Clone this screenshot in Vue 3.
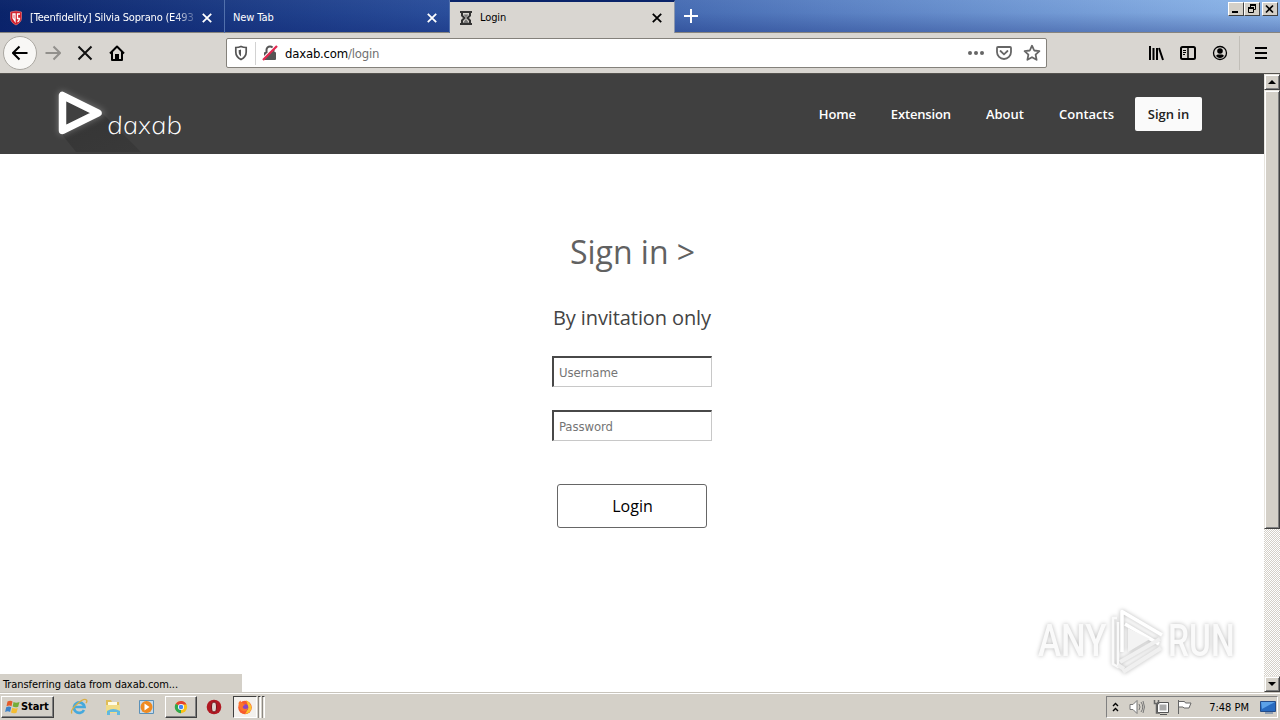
<script setup>
import { ref, reactive } from 'vue'

const tabs = [
  { title: '[Teenfidelity] Silvia Soprano (E493', icon: 'shield', fade: true },
  { title: 'New Tab', icon: '' },
  { title: 'Login', icon: 'hourglass' },
]
const activeTab = ref(2)

const links = [
  { name: 'Home', cls: 'home' },
  { name: 'Extension', cls: 'extension' },
  { name: 'About', cls: 'about' },
  { name: 'Contacts', cls: 'contacts' },
]

const form = reactive({
  username: '',
  password: '',
})
</script>

<template>
  <div class="screen">
    <div class="titlebar">
      <div v-for="(tab, i) in tabs" :key="tab.title" class="tab" :class="{ active: i === activeTab }" @click="activeTab = i">
        <svg v-if="tab.icon === 'shield'" class="tab-icon" width="16" height="16" viewBox="0 0 16 16">
          <path d="M2.500 2 8 1l5.500 1v6C13.500 11.500 11 13.500 8 15 5 13.500 2.500 11.500 2.500 8z" fill="#d3202b" stroke="#e88" stroke-width=".6" />
          <path d="M5 4v4l2 3V4zM9.500 12q2-1.500 2-3.500H9.500V4H12" fill="none" stroke="#fff" stroke-width="1.300" />
        </svg>
        <svg v-if="tab.icon === 'hourglass'" class="tab-icon" width="16" height="16" viewBox="0 0 16 16">
          <path d="M2 2h12M2 14h12" stroke="#333" stroke-width="2" />
          <path d="M4 2v3.500l2.500 2.500L4 10.500V14M12 2v3.500L9.500 8l2.500 2.500V14" fill="none" stroke="#333" stroke-width="2" />
          <path d="M5.500 4.500h5L8 7.500zM8 9l3 4H5z" fill="#777" />
        </svg>
        <span class="tab-title" :class="{ fade: tab.fade }">{{ tab.title }}</span>
        <svg class="tab-close" width="10" height="10" viewBox="0 0 10 10">
          <path d="M.8.800l8.400 8.400M9.200.800.800 9.200" stroke="currentColor" stroke-width="1.800" />
        </svg>
      </div>
      <svg class="plus" width="14" height="14" viewBox="0 0 14 14">
        <path d="M7 0v14M0 7h14" stroke="#fff" stroke-width="2" />
      </svg>
      <div class="win-buttons">
        <button class="win">
          <svg width="14" height="12" viewBox="0 0 14 12"><path d="M3 9h6" stroke="#000" stroke-width="2" /></svg>
        </button>
        <button class="win">
          <svg width="14" height="12" viewBox="0 0 14 12">
            <path d="M5.500 5V1.500h5v5H9" fill="none" stroke="#000" />
            <path d="M5 2h6M3 5h6" stroke="#000" stroke-width="2" />
            <path d="M3.500 4.500h5v5h-5z" fill="none" stroke="#000" />
          </svg>
        </button>
        <button class="win gap">
          <svg width="14" height="12" viewBox="0 0 14 12"><path d="m3 2.500 7 7m0-7-7 7" stroke="#000" stroke-width="1.700" /></svg>
        </button>
      </div>
    </div>

    <div class="toolbar">
      <div class="back">
        <svg width="16" height="16" viewBox="0 0 16 16"><path d="M15.500 8H1.500M7.500 1.500 1 8l6.500 6.500" fill="none" stroke="#000" stroke-width="2" /></svg>
      </div>
      <svg class="forward" width="16" height="16" viewBox="0 0 16 16"><path d="M.5 8h14M8.500 1.500 15 8l-6.500 6.500" fill="none" stroke="#92908c" stroke-width="2" /></svg>
      <svg class="stop" width="16" height="16" viewBox="0 0 16 16"><path d="m1.500 1.500 13 13m0-13-13 13" stroke="#111" stroke-width="2" /></svg>
      <svg class="house" width="16" height="16" viewBox="0 0 16 16">
        <path d="M1 8.500 8 1.500l7 7M3 7v8h10V7" fill="none" stroke="#000" stroke-width="2" stroke-linejoin="round" />
        <path d="M6 9h4v6H6z" />
      </svg>
      <div class="urlbar">
        <svg class="track" width="14" height="16" viewBox="0 0 14 16">
          <path d="M7 1.500c2 .9 3.700 1 5.200 1V7c0 3.500-1.700 5.700-5.200 7.500C3.500 12.700 1.800 10.500 1.800 7V2.500c1.500 0 3.200-.1 5.200-1z" fill="none" stroke="#555" stroke-width="1.700" />
          <path d="M7 4.500c-.9.400-1.600.5-2.300.5v2c0 2 .8 3.300 2.300 4.500z" fill="#555" />
        </svg>
        <i class="divider"></i>
        <svg class="lock" width="16" height="16" viewBox="0 0 16 16">
          <path d="M4.500 8V5a3.500 3.500 0 0 1 7 0v3" fill="none" stroke="#555" stroke-width="2" />
          <rect x="2" y="7" width="12" height="8" rx="1" fill="#555" />
          <path d="M.5 14 14 .5" stroke="#fff" stroke-width="2" />
          <path d="M1 15 15 1" stroke="#e22850" stroke-width="2.300" />
        </svg>
        <span class="url">daxab.com<em>/login</em></span>
        <svg class="dots" width="18" height="16" viewBox="0 0 18 16" fill="#666"><circle cx="3" cy="8" r="2" /><circle cx="9" cy="8" r="2" /><circle cx="15" cy="8" r="2" /></svg>
        <svg class="pocket" width="16" height="16" viewBox="0 0 16 16" fill="none" stroke="#666" stroke-width="1.800">
          <path d="M2 2h12q1 0 1 1v4a7 7 0 0 1-14 0V3q0-1 1-1z" /><path d="M4.500 6 8 9.300 11.500 6" stroke-linecap="round" />
        </svg>
        <svg class="star" width="18" height="18" viewBox="0 0 18 18"><path d="m9 1.700 2.200 4.800 5.200.6-3.800 3.500 1 5.200L9 13.200l-4.600 2.600 1-5.200L1.600 7.100l5.200-.6z" fill="none" stroke="#666" stroke-width="1.800" stroke-linejoin="round" /></svg>
      </div>
      <div class="tools">
        <svg width="16" height="16" viewBox="0 0 16 16"><path d="M2 1v14M5.500 3v12M9 3v12M11 3l4 12" stroke="#000" stroke-width="2" fill="none" /></svg>
        <svg width="16" height="16" viewBox="0 0 16 16"><rect x="1" y="2" width="14" height="12" rx="1.500" fill="none" stroke="#000" stroke-width="2" /><path d="M8 2v12" stroke="#000" stroke-width="1.500" /><path d="M3 5.500h3M3 7.500h3M3 9.500h2" stroke="#000" /></svg>
        <svg width="16" height="16" viewBox="0 0 16 16"><circle cx="8" cy="8" r="6.500" fill="none" stroke="#000" stroke-width="1.300" /><circle cx="8" cy="6" r="2.800" /><path d="M3.500 10q1 1 2-.5h5q1 1.500 2 .5Q11 13 8 13T3.500 10z" /></svg>
        <i class="sep"></i>
        <svg width="12" height="16" viewBox="0 0 12 16"><path d="M0 3h12M0 8h12M0 13h12" stroke="#000" stroke-width="2" /></svg>
      </div>
    </div>

    <div class="viewport">
      <div class="page">
        <header>
          <svg class="logo" width="140" height="80" viewBox="0 0 140 80">
            <defs>
              <filter id="glow" x="-30%" y="-30%" width="160%" height="160%"><feGaussianBlur stdDeviation="3" /></filter>
              <linearGradient id="shade" x1="0" y1="0" x2="1" y2="1"><stop offset="0" stop-color="#353535" /><stop offset="1" stop-color="#393939" /></linearGradient>
            </defs>
            <path d="M15 58 56 38l40 40H31z" fill="url(#shade)" />
            <path d="M17 21v36l38-18z" fill="none" stroke="#aaa" stroke-width="8" stroke-linejoin="round" filter="url(#glow)" opacity=".45" />
            <path d="M17.500 21.500v35L53 39z" fill="#404040" stroke="#fff" stroke-width="7.500" stroke-linejoin="round" />
            <!-- slanted face leaned back upright, it has the round one-storey a -->
            <g transform="translate(63.500 60) skewX(12)">
              <text x="0" y="0" textLength="75" lengthAdjust="spacingAndGlyphs">daxab</text>
            </g>
          </svg>
          <nav>
            <a v-for="link in links" :key="link.name" :class="link.cls">{{ link.name }}</a>
            <a class="signin">Sign in</a>
          </nav>
        </header>
        <main>
          <h1>Sign in &gt;</h1>
          <h2>By invitation only</h2>
          <form @submit.prevent>
            <input v-model="form.username" type="text" placeholder="Username">
            <input v-model="form.password" type="password" placeholder="Password">
            <button class="login">Login</button>
          </form>
        </main>
      </div>
      <div class="scrollbar">
        <div class="arrow"><svg width="8" height="4" viewBox="0 0 8 4"><path d="M0 4 4 0l4 4z" /></svg></div>
        <div class="thumb"></div>
        <div class="arrow down"><svg width="8" height="4" viewBox="0 0 8 4"><path d="m0 0 4 4 4-4z" /></svg></div>
      </div>
      <div class="status"><span>Transferring data from daxab.com...</span></div>
      <svg class="watermark" width="230" height="76" viewBox="0 0 230 76">
        <g class="mark">
          <text transform="translate(8 51) scale(.79 1)">ANY</text>
          <text transform="translate(138 51) scale(.76 1)">RUN</text>
          <path d="M92 47V6.500L132 30M95 19l34 20" fill="none" stroke="#fff" stroke-width="3.500" stroke-linejoin="round" />
          <path d="M87 13h-4v46l5 3V17" fill="none" stroke="#fafafa" stroke-width="2.500" stroke-linejoin="round" />
          <path d="M98 23v24l22-13z" fill="#f3f3f3" />
          <path d="M90 57 130 34M93 67l38-24M88 60l6 4" fill="none" stroke="#f0f0f0" stroke-width="4" stroke-linejoin="round" />
        </g>
      </svg>
    </div>

    <footer class="taskbar">
      <button class="start">
        <svg width="17" height="16" viewBox="0 0 16 16">
          <path d="M3 2.500q3-1.500 5 0L7 7.200q-2-1.200-5 0z" fill="#e45b2a" /><path d="M9 3q2.500 1.500 6 0l-1.300 4.800q-3 1.200-5.500-.2z" fill="#74ad3a" />
          <path d="M1.700 8.200q3-1.300 5 0L5.600 13q-2.200-1.300-5 0z" fill="#3c82c9" /><path d="M7.800 8.700q2.500 1.300 5.500.2L12 13.700q-3 1.200-5.500-.2z" fill="#f4bd32" />
        </svg>
        <b>Start</b>
      </button>
      <div class="quick">
        <svg width="18" height="18" viewBox="0 0 18 18"><path d="M14 12A5.300 5.300 0 1 1 14.500 9H5" fill="none" stroke="#45a9dd" stroke-width="2.700" /><path d="M2 15.500C-1 12 13-1 16.500 2q1 1-.5 3" fill="none" stroke="#d9ae45" stroke-width="1.300" /></svg>
        <svg width="18" height="18" viewBox="0 0 18 18"><path d="M2 2h5l1 2h7v11H2z" fill="#dfbd59" /><path d="M4 4h9v4H4z" fill="#fffbe3" /><path d="M2 7h14v8H2z" fill="#f1dc87" /><path d="M3 17v-4q6-4 13 0v4h-3v-3H6v3z" fill="#61b9df" /></svg>
        <svg width="18" height="18" viewBox="0 0 18 18"><path d="M1.500 2.500h14v13h-14z" fill="#c5dbed" stroke="#5b91b8" /><circle cx="8.500" cy="9" r="6" fill="#ef8a20" /><path d="m6.500 5.500 5 3.500-5 3.500z" fill="#fff" /></svg>
      </div>
      <div class="chrome-btn">
        <svg width="14" height="14" viewBox="0 0 16 16"><circle cx="8" cy="8" r="7" fill="#fbc116" /><path d="M8 8 2 4.400A7 7 0 0 1 14.200 5H8z" fill="#e34133" /><path d="M8 8v7A7 7 0 0 1 2 4.300z" fill="#2da84f" /><circle cx="8" cy="8" r="3.500" fill="#fff" /><circle cx="8" cy="8" r="2.600" fill="#4285f4" /></svg>
      </div>
      <svg class="opera" width="16" height="16" viewBox="0 0 16 16"><circle cx="8" cy="8" r="7.300" fill="#b01822" /><ellipse cx="8" cy="8" rx="2.500" ry="5" fill="#ded6d0" stroke="#721018" /></svg>
      <div class="firefox-btn">
        <svg width="18" height="18" viewBox="0 0 18 18"><circle cx="9" cy="9.500" r="6.800" fill="#f75a2d" /><path d="M10 2q5 3 5.500 8-.5 5-6.500 6Q14 10 10 2z" fill="#fdc52d" /><circle cx="9" cy="9.500" r="3.300" fill="#8746c5" /><path d="M2.500 5q1-2 2-2.500 0 2 2 2.500L9 7Q6 8 7 10q2 2 5 0-1 4-5 3-4-1-4.500-8z" fill="#fb752c" /></svg>
      </div>
      <i class="stack"></i><i class="stack"></i>
      <div class="tray">
        <svg class="chev" width="7" height="10" viewBox="0 0 7 10"><path d="m1 4 2.500-2.500L6 4M1 9l2.500-2.500L6 9" fill="none" stroke="#000" stroke-width="1.400" /></svg>
        <svg class="sound" width="16" height="16" viewBox="0 0 16 16"><path d="M1 5.500h3L8 1.500v13l-4-4H1z" fill="#fff" stroke="#777" /><path d="M10 5q2 3 0 6M12 3q3.500 5 0 10M14 2q3 6 0 12" fill="none" stroke="#777" /></svg>
        <svg class="net" width="16" height="16" viewBox="0 0 16 16"><path d="M5.500 4.500h9v8h-9z" fill="#aaa" stroke="#fff" stroke-width="2" /><path d="M4.500 3.500h11v10h-11zM7 15.500h7" fill="none" stroke="#555" /><path d="M1.500 1v3.500h4V1M3.500 4v10H7" fill="none" stroke="#666" stroke-width="1.500" /></svg>
        <svg class="flag" width="17" height="16" viewBox="0 0 17 16"><path d="M2.500 1v14M3 2.500h5.500l1 1.500h5.500L13 9H8l-1-1H3" fill="#fff" stroke="#666" /></svg>
        <span class="clock">7:48 PM</span>
        <svg class="desk" width="16" height="14" viewBox="0 0 16 14"><path d="M.5 1.500h15v10H.5z" fill="#286bc0" stroke="#244c89" /><path d="M1 2h14L2 9z" fill="#5ca2e8" /><path d="M5 13h8" stroke="#466a9b" /></svg>
      </div>
    </footer>
  </div>
</template>

<style>
body {
  overflow: hidden;
}
</style>

<style scoped>
* {
  box-sizing: border-box;
}

.screen {
  width: 1280px;
  height: 720px;
  display: flex;
  flex-direction: column;
  background: #fff;
  font: 11px "DejaVu Sans Condensed", "DejaVu Sans", sans-serif;
  font-stretch: condensed;
  color: #000;
}

svg {
  display: block;
  flex: none;
}

button {
  padding: 0;
  font: inherit;
}

.titlebar {
  height: 33px;
  display: flex;
  background:
    linear-gradient(180deg, rgba(255, 255, 255, .02), rgba(10, 30, 110, .03) 40%, rgba(10, 30, 110, .3)),
    linear-gradient(90deg, #0a246a, #2b4f9c 35%, #5b82c4 65%, #8fb8ea);
  border-bottom: 1px solid #87847e;
}

.tab {
  width: 225px;
  height: 33px;
  flex: none;
  display: flex;
  align-items: center;
  padding: 2px 12px 0 8px;
  color: #fff;
  border-right: 1px solid #5270ac;
}

.tab.active {
  background: #d9d6d1;
  color: #000;
  border-top: 2px solid #0a246a;
  border-right-color: #8b97ad;
  padding-top: 0;
}

.tab-icon {
  margin-right: 6px;
}

.tab-title {
  flex: 1;
  white-space: nowrap;
  letter-spacing: -.1px;
}

.fade {
  min-width: 0;
  letter-spacing: -.19px;
  -webkit-mask-image: linear-gradient(90deg, #000 87%, rgba(0, 0, 0, .2));
  mask-image: linear-gradient(90deg, #000 87%, rgba(0, 0, 0, .2));
}

.tab-close {
  margin-left: 7px;
}

.plus {
  margin: 9px 0 0 9px;
}

.win-buttons {
  display: flex;
  margin: 2px 2px 0 auto;
}

.win {
  width: 16px;
  height: 14px;
  background: #d4d0c8;
  border: 1px solid;
  border-color: #fff #404040 #404040 #fff;
}

.win.gap {
  margin-left: 2px;
}

.toolbar {
  height: 41px;
  display: flex;
  align-items: center;
  background: #d9d6d1;
  border-bottom: 1px solid #55534f;
  padding-left: 3px;
}

.back {
  width: 34px;
  height: 34px;
  border: 1px solid #aaa7a1;
  border-radius: 50%;
  background: #f8f7f5;
  display: flex;
  align-items: center;
  justify-content: center;
}

.forward {
  margin-left: 8px;
}

.stop,
.house {
  margin-left: 16px;
}

.urlbar {
  width: 821px;
  height: 30px;
  margin-left: 101px;
  display: flex;
  align-items: center;
  background: #fff;
  border: 1px solid #84817b;
  border-radius: 2px;
  padding: 0 5px 0 7px;
}

.divider {
  width: 1px;
  height: 23px;
  background: #d2d2d2;
  margin: 0 6px 0 7px;
}

.url {
  font-size: 13px;
  letter-spacing: -.2px;
  margin-left: 7px;
}

.url em {
  font-style: normal;
  color: #707070;
}

.dots {
  margin-left: auto;
}

.pocket {
  margin: 0 11px;
}

.tools {
  display: flex;
  align-items: center;
  margin-left: auto;
  padding-right: 13px;
}

.tools svg {
  margin-right: 16px;
}

.tools svg:last-child {
  margin-right: 0;
}

.sep {
  width: 1px;
  height: 34px;
  background: #c1beb8;
  margin: 0 15px 0 -5px;
}

.viewport {
  height: 618px;
  position: relative;
  display: flex;
}

.page {
  width: 1264px;
  font-family: "Open Sans", "Noto Sans", sans-serif;
  font-stretch: normal;
}

header {
  height: 80px;
  display: flex;
  background: #404040;
}

.logo {
  margin-left: 45px;
}

.logo text {
  font: italic 300 24px "Open Sans", "Noto Sans", sans-serif;
  fill: #fff;
}

nav {
  display: flex;
  align-items: center;
  margin-left: auto;
  padding-right: 62px;
  font-size: 13px;
  font-weight: 600;
  color: #fff;
}

nav a {
  margin-right: 35px;
}

nav .home {
  letter-spacing: -.15px;
}

nav .extension {
  letter-spacing: -.15px;
}

nav .contacts {
  margin-right: 21px;
}

nav .signin {
  width: 67px;
  height: 34px;
  line-height: 34px;
  margin: 0;
  text-align: center;
  background: #fafafa;
  color: #222;
  border-radius: 2px;
}

main {
  display: flex;
  flex-direction: column;
  align-items: center;
}

h1 {
  margin: 74px 0 0;
  padding-left: 1px;
  font-size: 32px;
  line-height: 48px;
  font-weight: 400;
  color: #616161;
}

h2 {
  margin: 27px 0 0;
  font-size: 20px;
  line-height: 30px;
  font-weight: 400;
  letter-spacing: -.1px;
  color: #444;
}

form {
  display: flex;
  flex-direction: column;
  align-items: center;
  margin-top: 23px;
}

input {
  width: 160px;
  height: 31px;
  margin-bottom: 23px;
  padding: 1px 5px 0;
  border: solid;
  border-width: 2px 1px 1px 2px;
  border-color: #484848 #c8c8c8 #c8c8c8 #484848;
  font: 13px "DejaVu Sans Condensed", "DejaVu Sans", sans-serif;
  font-stretch: condensed;
  letter-spacing: -.1px;
  outline: 0;
}

input::placeholder {
  color: #757575;
  opacity: 1;
}

.login {
  width: 150px;
  height: 44px;
  margin-top: 20px;
  padding-left: 1px;
  background: #fff;
  border: 1px solid #666;
  border-radius: 3px;
  font-size: 16px;
  color: #000;
}

.scrollbar {
  width: 16px;
  display: flex;
  flex-direction: column;
  background: repeating-conic-gradient(#d4d0c8 0 25%, #fff 0 50%) 0 0 / 2px 2px;
}

.arrow,
.thumb {
  background: #d4d0c8;
  border: 1px solid;
  border-color: #e8e5df #404040 #404040 #e8e5df;
  box-shadow: inset 1px 1px #fff, inset -1px -1px #808080;
}

.arrow {
  height: 16px;
  display: flex;
  align-items: center;
  justify-content: center;
}

.thumb {
  height: 439px;
}

.down {
  margin-top: auto;
}

.status {
  position: absolute;
  left: 0;
  bottom: 0;
  width: 242px;
  height: 18px;
  line-height: 21px;
  padding-left: 3px;
  background: #d4d0c8;
  white-space: nowrap;
  letter-spacing: -.08px;
}

.watermark {
  position: absolute;
  left: 1030px;
  top: 531px;
}

.mark {
  filter: drop-shadow(0 0 2px rgba(0, 0, 0, .28));
}

.mark text {
  font: 500 44px Roboto, sans-serif;
  fill: #fafafa;
}

.taskbar {
  height: 28px;
  display: flex;
  align-items: center;
  padding-left: 1px;
  background: #d4d0c8;
  border-top: 1px solid #c8c4bc;
  box-shadow: inset 0 1px #fff;
}

.start {
  width: 53px;
  height: 22px;
  display: flex;
  align-items: center;
  padding-left: 2px;
  background: #d4d0c8;
  border: 1px solid;
  border-color: #fff #404040 #404040 #fff;
  box-shadow: inset -1px -1px #808080;
}

.start b {
  font-size: 11px;
  letter-spacing: -.1px;
}

.quick {
  display: flex;
  gap: 16px;
  margin-left: 16px;
}

.chrome-btn,
.firefox-btn {
  height: 22px;
  display: flex;
  align-items: center;
  justify-content: center;
}

.chrome-btn {
  width: 32px;
  margin-left: 9px;
  border: 1px solid;
  border-color: #fff #404040 #404040 #fff;
  box-shadow: inset -1px -1px #808080;
}

.opera {
  margin-left: 9px;
}

.firefox-btn {
  width: 24px;
  margin-left: 11px;
  background: #f3f1ed;
  border: 1px solid;
  border-color: #404040 #fff #fff #404040;
}

.stack {
  width: 3px;
  height: 22px;
  margin-left: 1px;
  border-top: 1px solid #404040;
  border-right: 1px solid #fff;
  background: linear-gradient(90deg, #8c8983 1px, #ebe8e2 1px);
}

.tray {
  width: 172px;
  height: 22px;
  margin: 0 2px 0 auto;
  display: flex;
  align-items: center;
  border: 1px solid;
  border-color: #808080 #fff #fff #808080;
  padding-left: 5px;
}

.sound {
  margin-left: 10px;
}

.net {
  margin-left: 8px;
}

.flag {
  margin-left: 7px;
}

.clock {
  margin-left: auto;
  padding-top: 1px;
  white-space: nowrap;
}

.desk {
  margin: 0 1px 0 11px;
}
</style>
